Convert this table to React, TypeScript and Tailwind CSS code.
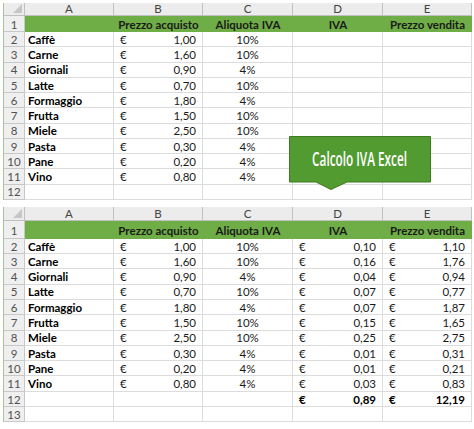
import React from "react";

type Item = { n: string; p: string; r: string; i: string; v: string };

const items: Item[] = [
  { n: "Caffè", p: "1,00", r: "10%", i: "0,10", v: "1,10" },
  { n: "Carne", p: "1,60", r: "10%", i: "0,16", v: "1,76" },
  { n: "Giornali", p: "0,90", r: "4%", i: "0,04", v: "0,94" },
  { n: "Latte", p: "0,70", r: "10%", i: "0,07", v: "0,77" },
  { n: "Formaggio", p: "1,80", r: "4%", i: "0,07", v: "1,87" },
  { n: "Frutta", p: "1,50", r: "10%", i: "0,15", v: "1,65" },
  { n: "Miele", p: "2,50", r: "10%", i: "0,25", v: "2,75" },
  { n: "Pasta", p: "0,30", r: "4%", i: "0,01", v: "0,31" },
  { n: "Pane", p: "0,20", r: "4%", i: "0,01", v: "0,21" },
  { n: "Vino", p: "0,80", r: "4%", i: "0,03", v: "0,83" },
];

const COLS = "grid grid-cols-[21px_89px_89px_90px_90px_89px]";

function Num({ n }: { n: number }) {
  return (
    <div className="flex items-end justify-center border-r border-b border-[#c8c8c8] bg-[#efefef] pb-[1px] text-[11.5px] leading-none text-[#505050]">
      {n}
    </div>
  );
}

function Cell({ children, cls = "" }: { children?: React.ReactNode; cls?: string }) {
  return (
    <div className={`flex items-end border-r border-b border-[#dcdcdc] pb-[1px] text-[11.5px] leading-none text-[#1a1a1a] ${cls}`}>
      {children}
    </div>
  );
}

function Money({ v, bold = false }: { v?: string; bold?: boolean }) {
  if (!v) return <Cell />;
  return (
    <Cell cls={`justify-between px-[6px] ${bold ? "font-bold text-black" : ""}`}>
      <span>€</span>
      <span>{v}</span>
    </Cell>
  );
}

function Sheet({ full, rows, headerH, row1H, rowH }: { full: boolean; rows: number; headerH: number; row1H: number; rowH: number }) {
  const body: React.ReactNode[] = [];
  for (let r = 2; r <= rows; r++) {
    const it = items[r - 2];
    const isTotal = full && r === 12;
    body.push(
      <div key={r} className={COLS} style={{ height: rowH }}>
        <Num n={r} />
        <Cell cls="pl-[3px] font-bold text-black">{it ? it.n : ""}</Cell>
        <Money v={it?.p} />
        <Cell cls="justify-center">{it ? it.r : ""}</Cell>
        {full ? (isTotal ? <Money v="0,89" bold /> : <Money v={it?.i} />) : <Cell />}
        {full ? (isTotal ? <Money v="12,19" bold /> : <Money v={it?.v} />) : <Cell />}
      </div>
    );
  }
  return (
    <div className="ml-[3px] w-[468px] border-l border-[#a9c49b]" style={{ fontFamily: "Lato, 'Open Sans', sans-serif" }}>
      <div className={COLS} style={{ height: headerH }}>
        <div className="relative border-r border-b border-[#c0c0c0] bg-[#ececec]">
          <svg width="9" height="9" viewBox="0 0 9 9" className="absolute right-[2px] bottom-[2px]">
            <polygon points="9,0 9,9 0,9" fill="#c6c6c6" />
          </svg>
        </div>
        {["A", "B", "C", "D", "E"].map((c) => (
          <div key={c} className="flex items-center justify-center border-r border-b border-[#c0c0c0] bg-[#ececec] text-[11.5px] leading-none text-[#444]">
            {c}
          </div>
        ))}
      </div>
      <div className={COLS} style={{ height: row1H }}>
        <Num n={1} />
        <div className="col-span-5 grid grid-cols-[89px_89px_90px_90px_89px] bg-[#6fae47] text-[11.5px] font-bold leading-none text-[#1a1a1a]">
          <div />
          <div className="flex items-end justify-center pb-[2px]">Prezzo acquisto</div>
          <div className="flex items-end justify-center pb-[2px]">Aliquota IVA</div>
          <div className="flex items-end justify-center pb-[2px]">IVA</div>
          <div className="flex items-end justify-center pb-[2px]">Prezzo vendita</div>
        </div>
      </div>
      {body}
    </div>
  );
}

export default function App() {
  return (
    <div className="relative h-[429px] w-[474px] bg-white">
      <div className="pt-[3px]">
        <Sheet full={false} rows={12} headerH={13} row1H={16} rowH={15.25} />
      </div>
      <div className="pt-[7px]">
        <Sheet full rows={13} headerH={14} row1H={18} rowH={15.3} />
      </div>
      <div className="absolute left-[289px] top-[136px] h-[55px] w-[143px]">
        <svg width="143" height="55" viewBox="0 0 143 55" className="absolute inset-0">
          <polygon
            points="0.5,0.5 141.5,0.5 141.5,46 58,46 42,53.5 27,46 0.5,46"
            fill="#519b31"
            stroke="#3d7a25"
            strokeWidth="1"
          />
        </svg>
        <div className="absolute left-0 top-0 flex h-[46px] w-[142px] items-center justify-center">
          <span
            className="inline-block origin-center scale-x-[0.62] whitespace-nowrap text-[19px] font-semibold leading-none text-white"
            style={{ fontFamily: "'Open Sans', sans-serif" }}
          >
            Calcolo IVA Excel
          </span>
        </div>
      </div>
    </div>
  );
}
